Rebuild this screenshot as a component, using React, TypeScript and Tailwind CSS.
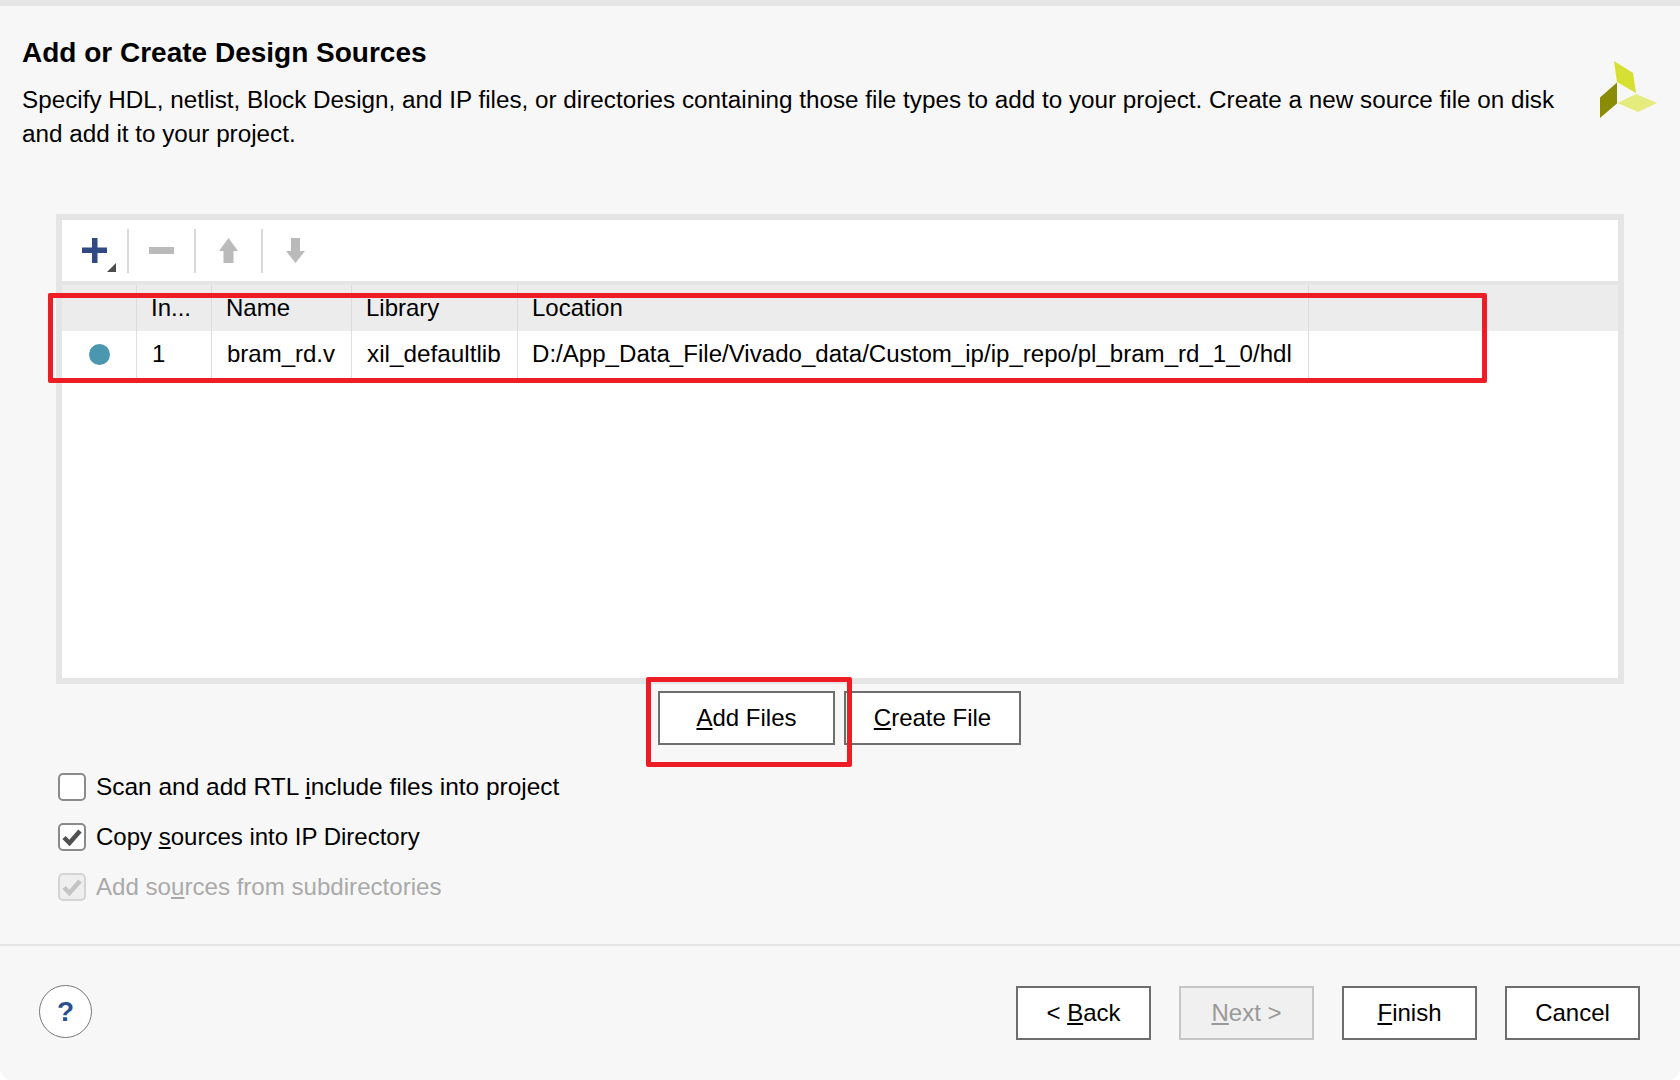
import type { ReactNode } from "react";

const FONT = "font-['Liberation_Sans',Arial,sans-serif]";

const columns = [
  { label: "", width: "w-[75px]", head: "", cell: "" },
  { label: "In...", width: "w-[75px]", head: "pl-[14px]", cell: "pl-[15px]" },
  { label: "Name", width: "w-[140px]", head: "pl-[14px]", cell: "pl-[15px]" },
  { label: "Library", width: "w-[166px]", head: "pl-[14px]", cell: "pl-[15px] text-[24.3px]" },
  { label: "Location", width: "w-[791px]", head: "pl-[14px]", cell: "pl-[14px] text-[24.08px]" },
];

function Logo() {
  return (
    <svg width="58" height="60" viewBox="0 0 58 60" className="shrink-0">
      <polygon points="14,1 33,13 36,33 17,22" fill="#d6e032" />
      <polygon points="17,22.5 17,43.5 0,58 0,37.5" fill="#8a8c05" />
      <polygon points="17.5,43 36,34 57,43 38,52" fill="#e5eb7d" />
    </svg>
  );
}

function AddIcon() {
  return (
    <span className="relative flex h-[61px] w-[56px] items-center justify-center">
      <svg width="25" height="25" viewBox="0 0 25 25" className="mr-[9px]">
        <path d="M10 0h5.5v9.5H25V15h-9.5v10H10V15H0V9.500h10z" fill="#2f4a83" />
      </svg>
      <svg width="9" height="9" viewBox="0 0 9 9" className="absolute bottom-[9px] right-[11px]">
        <polygon points="9,0 9,9 0,9" fill="#4d4d4d" />
      </svg>
    </span>
  );
}

function ToolbarSeparator() {
  return <span className="h-[44px] w-[2px] bg-[#d9d9d9]" />;
}

function ToolIcon({ children }: { children: ReactNode }) {
  return <span className="flex h-[61px] w-[65px] items-center justify-center">{children}</span>;
}

function Toolbar() {
  return (
    <div className="flex h-[61px] items-center pl-[9px]">
      <AddIcon />
      <ToolbarSeparator />
      <ToolIcon>
        <svg width="25" height="7" viewBox="0 0 25 7">
          <rect width="25" height="7" fill="#bababa" />
        </svg>
      </ToolIcon>
      <ToolbarSeparator />
      <ToolIcon>
        <svg width="19" height="25" viewBox="0 0 19 25">
          <path d="M9.500 0L19 13h-4.500v12h-10V13H0z" fill="#bababa" />
        </svg>
      </ToolIcon>
      <ToolbarSeparator />
      <ToolIcon>
        <svg width="19" height="25" viewBox="0 0 19 25">
          <path d="M5 0h9v13h5L9.500 25 0 13h5z" fill="#bababa" />
        </svg>
      </ToolIcon>
    </div>
  );
}

function FileTable() {
  const cells = ["", "1", "bram_rd.v", "xil_defaultlib", "D:/App_Data_File/Vivado_data/Custom_ip/ip_repo/pl_bram_rd_1_0/hdl"];
  return (
    <div className="h-[470px] border-[6px] border-[#e5e5e5] bg-white">
      <Toolbar />
      <div className="h-[4px] bg-[#e5e5e5]" />
      <div className="flex h-[46px] bg-[#ececec]">
        {columns.map((c) => (
          <div key={c.label} className={`${c.width} ${c.head} shrink-0 border-r border-[#dcdcdc] leading-[45px]`}>
            {c.label}
          </div>
        ))}
      </div>
      <div className="flex h-[52px]">
        {columns.map((c, i) => (
          <div key={c.label} className={`${c.width} ${c.cell} flex shrink-0 items-center border-r border-[#e0e0e0] pb-[6px]`}>
            {i === 0 ? <span className="ml-[27px] h-[21px] w-[21px] rounded-full bg-[#4c97b0]" /> : cells[i]}
          </div>
        ))}
      </div>
    </div>
  );
}

function Btn({ children, disabled, wide }: { children: ReactNode; disabled?: boolean; wide?: boolean }) {
  return (
    <button
      className={`flex h-[54px] items-center justify-center border-2 ${wide ? "w-[177px]" : "w-[135px]"} ${disabled ? "border-[#c6c6c6] bg-[#f0f0f0] text-[#999]" : "border-[#6e6e6e] bg-white"}`}
    >
      {children}
    </button>
  );
}

function Check({ label, checked, disabled }: { label: ReactNode; checked?: boolean; disabled?: boolean }) {
  return (
    <div className={`flex h-[28px] items-center gap-[10px] ${disabled ? "text-[#aaa]" : ""}`}>
      <span
        className={`flex h-[28px] w-[28px] items-center justify-center rounded-[5px] border-2 ${disabled ? "border-[#d4d4d4] bg-[#eeeeee]" : "border-[#8a8a8a] bg-white"}`}
      >
        {checked && (
          <svg width="20" height="18" viewBox="0 0 20 18">
            <path d="M2 9.500l5.500 5.500L18 3" fill="none" stroke={disabled ? "#c4c4c4" : "#505050"} strokeWidth="4.500" />
          </svg>
        )}
      </span>
      {label}
    </div>
  );
}

export default function App() {
  return (
    <div className="h-[1080px] w-[1680px] bg-white">
      <div className={`${FONT} relative flex h-[1080px] w-[1680px] flex-col overflow-hidden rounded-b-[12px] bg-[#f7f7f7] text-[24px] text-black`}>
        <div className="h-[6px] shrink-0 bg-[#e5e5e5]" />

        <header className="flex h-[208px] shrink-0 items-start justify-between pl-[22px] pr-[22px]">
          <div className="w-[1560px]">
            <h1 className="mt-[26px] text-[28px] font-bold leading-[42px]">Add or Create Design Sources</h1>
            <p className="mt-[9px] text-[24.25px] leading-[34px]">
              Specify HDL, netlist, Block Design, and IP files, or directories containing those file types to add to your project. Create a new source file on disk
              <br />
              and add it to your project.
            </p>
          </div>
          <div className="mt-[54px]">
            <Logo />
          </div>
        </header>

        <div className="ml-[56px] w-[1568px] shrink-0">
          <FileTable />
        </div>

        <div className="mt-[7px] flex shrink-0 justify-center gap-[9px] pr-[1px]">
          <Btn wide>
            <span>
              <u>A</u>dd Files
            </span>
          </Btn>
          <Btn wide>
            <span>
              <u>C</u>reate File
            </span>
          </Btn>
        </div>

        <div className="ml-[58px] mt-[28px] flex shrink-0 flex-col gap-[22px]">
          <Check label={<span className="text-[24.45px]">Scan and add RTL <u>i</u>nclude files into project</span>} />
          <Check checked label={<span>Copy <u>s</u>ources into IP Directory</span>} />
          <Check checked disabled label={<span className="text-[24.1px]">Add so<u>u</u>rces from subdirectories</span>} />
        </div>

        <div className="mt-[43px] h-[2px] shrink-0 bg-[#e5e5e5]" />

        <footer className="flex flex-1 items-start justify-between pl-[39px] pr-[40px] pt-[40px]">
          <button className="-mt-px flex h-[53px] w-[53px] items-center justify-center rounded-full border border-[#777] bg-white text-[28px] font-bold text-[#2c4f8f]">
            ?
          </button>
          <div className="flex gap-[28px]">
            <Btn>
              <span>
                &lt; <u>B</u>ack
              </span>
            </Btn>
            <Btn disabled>
              <span>
                <u>N</u>ext &gt;
              </span>
            </Btn>
            <Btn>
              <span>
                <u>F</u>inish
              </span>
            </Btn>
            <Btn>Cancel</Btn>
          </div>
        </footer>

        {/* red annotation boxes drawn over the dialog */}
        <div className="absolute left-[48px] top-[293px] h-[90px] w-[1439px] rounded-[2px] border-[5px] border-[#ee1c25]" />
        <div className="absolute left-[646px] top-[677px] h-[90px] w-[206px] rounded-[2px] border-[5px] border-[#ee1c25]" />
      </div>
    </div>
  );
}
